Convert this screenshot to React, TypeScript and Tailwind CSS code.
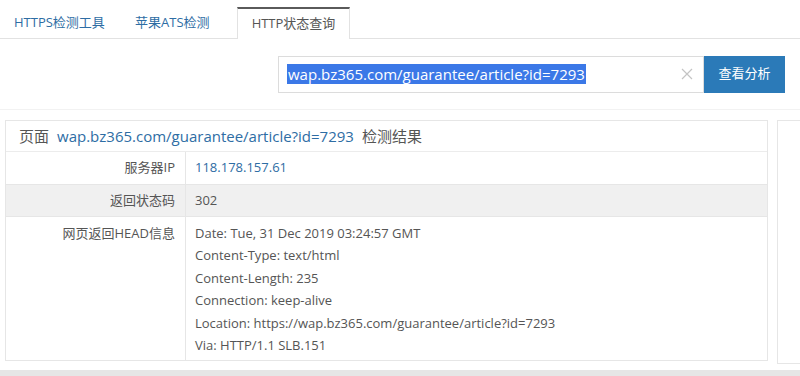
import React from "react";

const font = { fontFamily: '"Open Sans", "Noto Sans CJK SC", sans-serif' };

export default function App() {
  const headLines = [
    "Date: Tue, 31 Dec 2019 03:24:57 GMT",
    "Content-Type: text/html",
    "Content-Length: 235",
    "Connection: keep-alive",
    "Location: https://wap.bz365.com/guarantee/article?id=7293",
    "Via: HTTP/1.1 SLB.151",
  ];
  return (
    <div className="w-[800px] h-[376px] bg-white overflow-hidden flex flex-col text-[#555]" style={font}>
      {/* Tabs */}
      <div className="h-[39px] flex items-end border-b border-[#e2e2e2] shrink-0">
        <div className="h-[31px] w-[121px] pl-[14px] flex items-center text-[13px] text-[#2e6da4]">HTTPS检测工具</div>
        <div className="h-[31px] w-[116px] pl-[14px] flex items-center text-[13px] text-[#2e6da4]">苹果ATS检测</div>
        <div className="h-[32px] w-[113px] -mb-px bg-white border-x border-[#e2e2e2] border-t-2 border-t-[#5a5a5a] flex items-center justify-center text-[13px] text-[#555]">HTTP状态查询</div>
      </div>
      {/* Search */}
      <div className="h-[71px] shrink-0 flex items-center pl-[278px] border-b border-[#f2f2f2]">
        <div className="w-[426px] h-[37px] border border-[#dcdcdc] flex items-center pl-[8px] pr-[10px]">
          <span className="text-[15px] leading-[20px] text-white bg-[#3b78e7] px-[1px]">wap.bz365.com/guarantee/article?id=7293</span>
          <span className="ml-auto text-[#c4c4c4]">
            <svg width="12" height="12" viewBox="0 0 12 12" stroke="currentColor" strokeWidth="1.2" fill="none"><path d="M1 1L11 11M11 1L1 11" /></svg>
          </span>
        </div>
        <div className="w-[81px] h-[37px] bg-[#2b7ab8] text-white text-[13px] flex items-center justify-center">查看分析</div>
      </div>
      {/* Content */}
      <div className="flex pt-[10px] pl-[5px] gap-[9px] flex-1">
        <div className="w-[763px] h-[241px] border border-[#e6e6e6] flex flex-col">
          <div className="h-[31px] flex items-center pl-[13px] text-[15px] border-b border-[#ececec] shrink-0">
            <span className="text-[#555]">页面</span>
            <span className="ml-[8px] text-[#2e6da4]">wap.bz365.com/guarantee/article?id=7293</span>
            <span className="ml-[8px] text-[#555]">检测结果</span>
          </div>
          <div className="h-[33px] flex text-[13px] border-b border-[#e6e6e6] shrink-0">
            <div className="w-[180px] border-r border-[#e6e6e6] flex items-center justify-end pr-[10px]">服务器IP</div>
            <div className="flex items-center pl-[9px] text-[#2e6da4]">118.178.157.61</div>
          </div>
          <div className="h-[32px] flex text-[13px] bg-[#f0f0f0] border-b border-[#e6e6e6] shrink-0">
            <div className="w-[180px] border-r border-[#e6e6e6] flex items-center justify-end pr-[10px]">返回状态码</div>
            <div className="flex items-center pl-[9px]">302</div>
          </div>
          <div className="flex flex-1 text-[13px]">
            <div className="w-[180px] border-r border-[#e6e6e6] flex justify-end pr-[10px] pt-[5px] leading-[22.4px]">网页返回HEAD信息</div>
            <div className="pl-[9px] pt-[5px] leading-[22.4px] flex flex-col">
              {headLines.map((l) => (
                <span key={l}>{l}</span>
              ))}
            </div>
          </div>
        </div>
        <div className="flex-1 h-[244px] border border-[#e6e6e6] border-r-0"></div>
      </div>
      <div className="h-[6px] bg-[#e6e6e6] shrink-0"></div>
    </div>
  );
}
